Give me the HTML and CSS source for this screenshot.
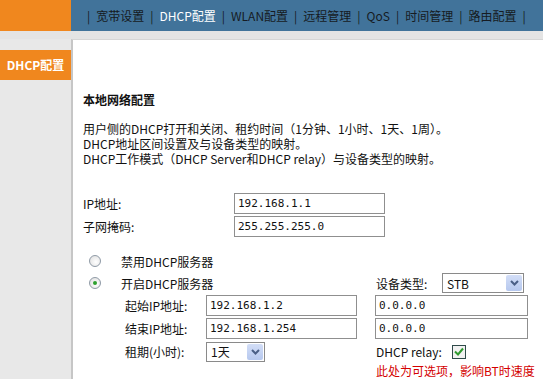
FILE: index.html
```html
<!DOCTYPE html>
<html lang="zh-CN">

<head>
  <meta charset="UTF-8" />
  <meta name="viewport" content="width=device-width, initial-scale=1.0" />
  <title>DHCP配置</title>
  <link rel="stylesheet" href="styles.css">
</head>

<body>
  <div class="top">
    <div class="top-logo"></div>
    <div class="tabs">
      <span class="sep">|</span><span>宽带设置</span>
      <span class="sep">|</span><span class="active">DHCP配置</span>
      <span class="sep">|</span><span>WLAN配置</span>
      <span class="sep">|</span><span>远程管理</span>
      <span class="sep">|</span><span>QoS</span>
      <span class="sep">|</span><span>时间管理</span>
      <span class="sep">|</span><span>路由配置</span>
      <span class="sep">|</span>
    </div>
  </div>

  <div class="band"></div>

  <div class="main">

    <div class="side">
      <div class="side-item">DHCP配置</div>
    </div>

    <div class="content">
      <h2 class="title">本地网络配置</h2>
      <p class="desc">
        用户侧的DHCP打开和关闭、租约时间（1分钟、1小时、1天、1周）。<br>
        DHCP地址区间设置及与设备类型的映射。<br>
        DHCP工作模式（DHCP Server和DHCP relay）与设备类型的映射。
      </p>

      <div class="lan">
        <div class="field">
          <label>IP地址:</label>
          <input class="text" type="text" value="192.168.1.1">
        </div>
        <div class="field">
          <label>子网掩码:</label>
          <input class="text" type="text" value="255.255.255.0">
        </div>
      </div>

      <div class="dhcp">
        <div class="row radio-row">
          <div class="opt">
            <span class="radio"></span>
            <span>禁用DHCP服务器</span>
          </div>
        </div>

        <div class="row radio-row">
          <div class="opt">
            <span class="radio on"></span>
            <span>开启DHCP服务器</span>
          </div>
          <div class="col-right type">
            <span class="type-label">设备类型:</span>
            <div class="select wide">
              <span class="select-text">STB</span>
              <span class="select-arrow">
                <svg width="9" height="6" viewBox="0 0 9 6"><path d="M1 1 L4.5 4.5 L8 1" fill="none" stroke="#4a5f86" stroke-width="2" /></svg>
              </span>
            </div>
          </div>
        </div>

        <div class="row">
          <label class="sub-label">起始IP地址:</label>
          <input class="text mid" type="text" value="192.168.1.2">
          <input class="text col-right" type="text" value="0.0.0.0">
        </div>

        <div class="row">
          <label class="sub-label">结束IP地址:</label>
          <input class="text mid" type="text" value="192.168.1.254">
          <input class="text col-right" type="text" value="0.0.0.0">
        </div>

        <div class="row">
          <label class="sub-label">租期(小时):</label>
          <div class="mid">
            <div class="select short">
              <span class="select-text">1天</span>
              <span class="select-arrow">
                <svg width="9" height="6" viewBox="0 0 9 6"><path d="M1 1 L4.5 4.5 L8 1" fill="none" stroke="#4a5f86" stroke-width="2" /></svg>
              </span>
            </div>
          </div>
          <div class="col-right relay">
            <span class="relay-label">DHCP relay:</span>
            <span class="check">
              <svg width="10" height="9" viewBox="0 0 10 9"><path d="M1 4.5 L4 7.5 L9 1.5" fill="none" stroke="#2e9a2e" stroke-width="2" /></svg>
            </span>
          </div>
        </div>

        <div class="row note-row">
          <div class="col-right note">此处为可选项，影响BT时速度</div>
        </div>
      </div>
    </div>

  </div>
</body>

</html>
```

FILE: styles.css
```css
* {
  box-sizing: border-box;
}

body {
  margin: 0;
  height: 379px;
  overflow: hidden;
  font-family: "Noto Sans CJK SC", sans-serif;
  font-size: 12px;
  color: #111;
  background: #e8e8e8;
}

/* top tab bar */
.top {
  display: flex;
  height: 31px;
}

.top-logo {
  flex: none;
  width: 71px;
  background: #f0871e;
}

.tabs {
  flex: 1;
  min-width: 0;
  display: flex;
  align-items: center;
  padding-left: 10px;
  background: #41739a;
  color: #161b22;
  white-space: nowrap;
  line-height: 14px;
  overflow: hidden;
}

.tabs .sep {
  margin: 0 6px;
}

.tabs .active {
  color: #fff;
}

.band {
  height: 8px;
  background: #e4e4e4;
}

/* body */
.main {
  display: flex;
  height: 340px;
}

.side {
  flex: none;
  width: 71px;
  padding-top: 11px;
  background: #e8e8e8;
}

.side-item {
  height: 30px;
  line-height: 30px;
  text-align: center;
  background: #f0871e;
  color: #fff;
  font-weight: bold;
}

.content {
  flex: 1;
  min-width: 0;
  overflow: hidden;
  padding: 53px 0 0 10px;
  background: #fff;
  border-left: 2px solid #c6c6c6;
  border-top: 1px solid #d6d6d6;
}

.title {
  margin: 0;
  font-size: 12px;
  font-weight: bold;
  line-height: 14px;
}

.desc {
  margin: 14px 0 0;
  line-height: 15px;
  white-space: nowrap;
}

.lan {
  margin-top: 27px;
  display: flex;
  flex-direction: column;
  gap: 2px;
}

.field {
  display: flex;
  align-items: center;
}

.field label {
  flex: none;
  width: 151px;
}

.text {
  flex: none;
  height: 21px;
  margin: 0;
  padding: 0 3px;
  border: 1px solid #8f8f8f;
  font-family: "DejaVu Sans Mono", monospace;
  font-size: 11px;
  color: #111;
  background: #fff;
  outline: none;
}

.lan .text {
  width: 151px;
}

/* dhcp block */
.dhcp {
  margin-top: 14px;
  display: flex;
  flex-direction: column;
  gap: 2px;
}

.row {
  display: flex;
  align-items: center;
  height: 21px;
  white-space: nowrap;
}

.radio-row {
  height: 20px;
}

.note-row {
  height: 14px;
  padding-left: 274px;
}

.opt {
  flex: none;
  width: 292px;
  display: flex;
  align-items: center;
  gap: 20px;
  padding-left: 6px;
}

.sub-label {
  flex: none;
  width: 123px;
  padding-left: 42px;
}

.mid {
  flex: none;
  width: 151px;
}

.col-right {
  flex: none;
  width: 153px;
  margin-left: 18px;
}

.opt + .col-right {
  margin-left: 0;
}

.radio {
  width: 12px;
  height: 12px;
  border-radius: 50%;
  border: 1px solid #8f9aa6;
  background: radial-gradient(circle at 60% 60%, #fff, #dcdcdc);
  display: grid;
  place-items: center;
}

.radio.on::after {
  content: "";
  width: 4px;
  height: 4px;
  border-radius: 50%;
  background: #2ea02e;
}

.type {
  display: flex;
  align-items: center;
  padding-left: 1px;
}

.type-label {
  width: 66px;
}

.select {
  height: 20px;
  display: flex;
  align-items: center;
  border: 1px solid #8a8a8a;
  background: #fff;
}

.select.wide {
  width: 82px;
}

.select.short {
  width: 59px;
}

.select-text {
  flex: 1;
  padding-left: 4px;
}

.select-arrow {
  width: 16px;
  height: 16px;
  margin-right: 1px;
  display: grid;
  place-items: center;
  border-radius: 2px;
  background: linear-gradient(#d3def7, #b6c8ee);
}

.relay {
  display: flex;
  align-items: center;
  padding-left: 1px;
}

.relay-label {
  width: 76px;
}

.check {
  width: 14px;
  height: 14px;
  display: grid;
  place-items: center;
  border: 1px solid #2f4a4a;
  background: #f2f2f2;
}

.note {
  padding-left: 1px;
  line-height: 12px;
  color: #d40000;
}
```
